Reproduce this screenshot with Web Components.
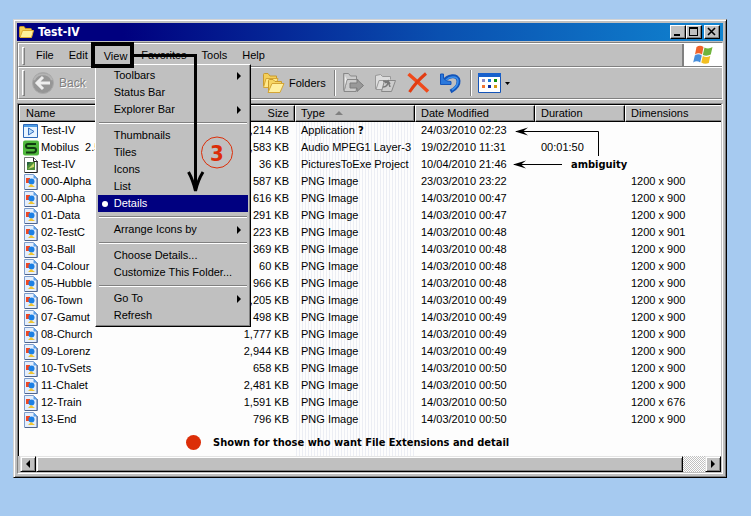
<!DOCTYPE html>
<html lang="en">
<head>
<meta charset="utf-8">
<title>Test-IV</title>
<style>
html{height:100%}
body{margin:0;min-height:100vh;box-sizing:border-box;padding:19px 24px 38px 13px;background:#a6caf0;display:flex;
 font:11px/17px "Liberation Sans",Arial,sans-serif;color:#000;
 --face:#c0c0c0;--shade:#808080;--label:"DejaVu Sans Condensed","DejaVu Sans",sans-serif}
</style>
</head>
<body>
<explorer-window>
  <title-bar slot="title">Test-IV</title-bar>
  <menu-bar slot="bars"></menu-bar>
  <tool-bar slot="bars"></tool-bar>
  <file-list>Shown for those who want File Extensions and detail</file-list>
  <note-layer slot="notes"></note-layer>
</explorer-window>
<script>
const define=(name,html,init)=>customElements.define(name,class extends HTMLElement{
  constructor(){super();this.attachShadow({mode:'open'}).innerHTML=html;if(init)init(this.shadowRoot,this);}
});
const reset=`*,:host{box-sizing:border-box}button{font:inherit;color:inherit;background:none;border:0;padding:0;margin:0;text-align:left}svg{display:block;flex:none}`;

define('explorer-window',`<style>${reset}
:host{flex:1;min-width:0;display:flex;flex-direction:column;position:relative;background:var(--face);padding:3px;
 border:1px solid;border-color:#d4d4d4 #000 #000 #d4d4d4;box-shadow:inset 1px 1px #fff,inset -1px -1px var(--shade)}
.bars{margin-top:1px;border:1px solid;border-color:var(--shade) #fff #fff var(--shade);position:relative;z-index:2}
main{flex:1;display:flex;margin-top:3px}
</style><slot name="title"></slot><div class="bars"><slot name="bars"></slot></div><main><slot></slot></main><slot name="notes"></slot>`);

define('title-bar',`<style>${reset}
:host{display:flex;align-items:center;height:18px;padding:0 3px 0 2px;background:linear-gradient(90deg,#00007f 15%,#0a50b0 60%,#1084d0);color:#fff}
h1{margin:0 auto 0 4px;font:bold 12px/18px "DejaVu Sans Condensed","DejaVu Sans",sans-serif}
button{width:16px;height:14px;background:var(--face);border:1px solid;border-color:#fff #000 #000 #fff;box-shadow:inset -1px -1px var(--shade)}
button+button+button{margin-left:2px}
</style>
<svg width="15" height="14" viewBox="0 0 15 14"><path d="M.5 12V2.500q0-1 1-1H5l1.500 2h5q1 0 1 1V6" fill="#f5cf55" stroke="#c89624"/><path d="M1 12.500 3.500 5.500H14.500L12.500 12.500z" fill="#fff19b" stroke="#dfac32"/></svg>
<h1><slot></slot></h1>
<button aria-label="Minimize"><svg width="14" height="12"><path d="M3 8h6v2H3z"/></svg></button>
<button aria-label="Maximize"><svg width="14" height="12"><path d="M2 1h9v9H2zM3 3v6h7V3z" fill-rule="evenodd"/></svg></button>
<button aria-label="Close"><svg width="14" height="12"><path d="M3 2l7 7M10 2l-7 7" stroke="#000" stroke-width="1.600"/></svg></button>`);

define('menu-bar',`<style>${reset}
:host{display:flex;height:24px;border-left:1px solid #fff;border-top:1px solid #fff;border-bottom:1px solid var(--shade)}
i{width:3px;margin:3px 0 1px 3px;border:1px solid;border-color:#fff var(--shade) var(--shade) #fff}
nav{display:flex;margin-left:4px;flex:1}
nav>button,.open>button{padding:0 8px 0 7px;height:22px;line-height:22px}
.open{position:relative}
.open>button{padding:1px 7px 0 8px}
drop-menu{position:absolute;left:-1px;top:20px;z-index:3}
.logo{width:40px;background:#fff;border-left:2px solid var(--shade);padding:1px 0 0 9px}
</style><i></i><nav><button>File</button><button>Edit</button><div class="open"><button aria-expanded="true">View</button><drop-menu></drop-menu></div><button>Favorites</button><button>Tools</button><button>Help</button></nav>
<div class="logo"><svg width="21" height="19" viewBox="0 0 21 19"><path d="M3.500 2Q7-.5 10.500 2L9 9.500Q5.500 7 2 9.500z" fill="#f0622a"/><path d="M11.500 2.500q4 2 8-.5l-1.700 7.500q-4 2-8 .5z" fill="#70b43c"/><path d="M1.800 10.500q3.700-2.500 7 0L7.200 17.500q-3.500-2.500-7 0z" fill="#478edb"/><path d="M9.800 11q4 2 7.500-.3L15.800 18q-4 1.800-7.500-.5z" fill="#f3bf21"/></svg></div>`);

define('drop-menu',`<style>${reset}
:host{display:block;width:156px;background:var(--face);padding:2px;border:1px solid;border-color:#fff #000 #000 #fff;box-shadow:inset -1px -1px var(--shade)}
button{display:flex;align-items:center;width:100%;height:17px;padding:0 7px 0 16px}
button svg{margin-left:auto}
.on{background:navy;color:#fff;padding-left:4px}
.on:before{content:"";width:6px;height:6px;border-radius:3px;background:#fff;margin-right:6px}
hr{margin:4px 1px 3px;border:0;border-top:1px solid var(--shade);border-bottom:1px solid #fff}
</style><div role="menu"></div>`,root=>{
  const sub=new Set(['Toolbars','Explorer Bar','Arrange Icons by','Go To']);
  root.querySelector('div').innerHTML=['Toolbars','Status Bar','Explorer Bar','','Thumbnails','Tiles','Icons','List','Details','','Arrange Icons by','','Choose Details...','Customize This Folder...','','Go To','Refresh']
   .map(t=>t?`<button role="menuitem"${t==='Details'?' class="on"':''}>${t}${sub.has(t)?'<svg width="4" height="8"><path d="M0 0l4 4-4 4z"/></svg>':''}</button>`:'<hr>').join('');
});

define('tool-bar',`<style>${reset}
:host{display:flex;align-items:center;height:32px;border-left:1px solid #fff;border-top:1px solid #fff;border-bottom:1px solid var(--shade)}
i{width:3px;height:26px;margin-left:3px;border:1px solid;border-color:#fff var(--shade) var(--shade) #fff}
button{display:flex;align-items:center;gap:4px}
.back{width:64px;margin-left:6px;color:var(--shade);text-shadow:1px 1px #fff;font-size:12px}
.folders{margin-left:167px}
.sep{width:2px;height:26px;border-left:1px solid var(--shade);border-right:1px solid #fff;margin:0 6px 0 8px}
.row{display:flex;gap:9px}
</style><i></i>
<button class="back" disabled><svg width="24" height="24" viewBox="0 0 24 24"><circle cx="12" cy="12" r="10.500" fill="#969696" stroke="#aaa"/><path d="M3 9a10 10 0 0 1 18 0" fill="none" stroke="#b4b4b4" stroke-width="2"/><path d="M12 6l-6 6 6 6M7 12h12" fill="none" stroke="#eee" stroke-width="3"/></svg>Back</button>
<button class="folders"><svg width="23" height="22" viewBox="0 0 23 22"><path d="M1.500 14V2.500q0-1 1-1H6l2 2.500h6.500v4" fill="#f4cf5a" stroke="#c99a2c"/><path d="M1.500 15.500 4 6.500h12l-3 9z" fill="#ffe98b" stroke="#d4a536"/><path d="M6.500 19V8.500q0-1 1-1H11l2 2h6.500v4" fill="#f6d663" stroke="#c99a2c"/><path d="M6 20.500l4-9h12l-4 9z" fill="#fff0a0" stroke="#d4a536"/></svg>Folders</button>
<span class="sep"></span>
<div class="row">
<button aria-label="Move To" disabled><svg width="23" height="22" viewBox="0 0 23 22"><path d="M1.500 18V1.500h5l2 2.500h6v4M2 19.500 5 7.500h11l-2 12z" fill="#ccc" stroke="#888"/><path d="M2 2v17l3-11" fill="#eee" stroke="#999"/><path d="M8 11h7V7.500l6.500 6-6.500 6V16H8z" fill="#999" stroke="#7c7c7c"/></svg></button>
<button aria-label="Copy To" disabled><svg width="23" height="22" viewBox="0 0 23 22"><path d="M1.500 17V3.500l5-1 2 2h8v3M2 17.500l3-9h6l-2 9z" fill="#ddd" stroke="#999"/><path d="M7.500 19.500l3-11h11l-4 11z" fill="#ccc" stroke="#888"/><path d="M9 15q5 0 5-6l-3 2m3-2 2 3M9 9q6 0 7 6" fill="none" stroke="#777" stroke-width="1.500"/></svg></button>
<button aria-label="Delete"><svg width="24" height="22" viewBox="0 0 24 22"><path d="M2.500 2Q13 11 22 19.500" fill="none" stroke="#f04a1b" stroke-width="3.500"/><path d="M20 1.500Q10 10 3.500 20" fill="none" stroke="#e23c12" stroke-width="3"/></svg></button>
<button aria-label="Undo"><svg width="23" height="22" viewBox="0 0 23 22"><path d="M5 9.500C8 3.500 19 1.500 19.500 9Q20 15 11.500 19.500" fill="none" stroke="#1454b8" stroke-width="4"/><path d="M1.500 2v10.500H12V9.500L8 9 4.500 6.500V2z" fill="#2a78dc" stroke="#1454b8"/><path d="M7 8c4-4 11-4 12 .500q.5 5-6 9.500" fill="none" stroke="#3a90ee" stroke-width="1.600"/></svg></button>
</div>
<span class="sep"></span>
<button aria-label="Views"><svg width="23" height="20" viewBox="0 0 23 20"><path d="M.5.5h22v19H.5z" fill="#fff" stroke="#1454b8"/><path d="M0 0h23v4H0z" fill="#1760cc"/><path d="M4 6h3v3H4z" fill="#8c8cc8"/><path d="M10 6h3v3h-3z" fill="#1678d8"/><path d="M16 6h3v3h-3z" fill="#109010"/><path d="M4 12h3v3H4z" fill="#f47430"/><path d="M10 12h3v3h-3z" fill="#1030a0"/><path d="M16 12h3v3h-3z" fill="#d49a10"/></svg><svg width="5" height="3"><path d="M0 0h5L2.500 3z"/></svg></button>`);

const icons={
 png:'<path d="M1.500.5h9l4 4v11h-13z" fill="#e4eefc" stroke="#7c9ccc"/><path d="M10.500.5l4 4h-4z" fill="#5ba0e8"/><path d="M14 4v11.500H2" fill="none" stroke="#50658c"/><path d="M3 4h4v5H3z" fill="#ee4824"/><circle cx="8.500" cy="7.500" r="3" fill="#1c80e4"/><path d="M5 13l3-3 4 3z" fill="#f0c430"/>',
 app:'<path d="M.5 1.500h14v13H.5z" fill="#e8f4ff" stroke="#2c68b8"/><path d="M1 2h13v2H1z" fill="#4c9ae4"/><path d="M5.500 5v7L11 8.500z" fill="#b8dcfa" stroke="#3870c0"/>',
 snd:'<rect width="16" height="15" y=".5" rx="2" fill="#50b83c"/><path d="M13 4H5Q3 4 3 6t2 2h6q2 0 2 2t-2 2.500H3" fill="none" stroke="#103c10" stroke-width="2"/>',
 pte:'<path d="M1.500.5h9l4 4v11h-13z" fill="#fff" stroke="#777"/><path d="M10.500.5v4h4M14 4v11.500H2" fill="none" stroke="#222"/><path d="M4 5h8v8H4z" fill="#4c8c38"/><path d="M5 12l6-6v4z" fill="#c8d868"/><path d="M4 5h4L4 9z" fill="#286040"/>'};
define('file-list',`<style>${reset}
:host{flex:1;min-width:0;display:flex;flex-direction:column;border:1px solid;border-color:var(--shade) #fff #fff var(--shade)}
.view{flex:1;display:flex;flex-direction:column;margin-right:1px;border-left:1px solid #000;border-top:1px solid #000;
 background:repeating-linear-gradient(90deg,#eceef4 0 1px,#fdfdfd 1px 3px) 277px 0/119px 100% no-repeat,#fdfdfd}
table{width:100%;table-layout:fixed;border-collapse:separate;border-spacing:0}
th,td{height:17px;padding:0 6px;text-align:left;font-weight:normal;white-space:nowrap;overflow:hidden}
th{background:var(--face);border:1px solid;border-color:#fff #000 #000 #fff;box-shadow:inset -1px -1px var(--shade);padding:0 5px;line-height:15px}
th svg{display:inline-block;margin:0 0 2px 10px}
th:first-child{padding-left:6px}th:last-child{border-right:0;box-shadow:inset 0 -1px var(--shade)}
td:first-child div{display:flex;gap:2px;white-space:pre;height:17px;align-items:center}td:first-child{padding-left:4px}
.num{text-align:right}
b{font-family:var(--label)}
.caption{flex:1;display:flex;align-items:center;gap:12px;min-height:27px;padding-left:167px;font:bold 11px/17px var(--label)}
.caption:before{content:"";width:15px;height:15px;border-radius:8px;background:#dc2e08}
</style><div class="view"><table><colgroup><col style="width:196px"><col style="width:80px"><col style="width:120px"><col style="width:120px"><col style="width:90px"><col></colgroup>
<thead><tr><th>Name</th><th class="num">Size</th><th>Type<svg width="8" height="4"><path d="M0 4l4-4 4 4z" fill="#808080"/></svg></th><th>Date Modified</th><th>Duration</th><th>Dimensions</th></tr></thead><tbody></tbody></table>
<div class="caption"><slot></slot></div></div><scroll-bar></scroll-bar>`,root=>{
 const rows=[['Test-IV','9,214','Application <b>?</b>','24/03/2010 02:23','','','app'],['Mobilus  2.5','2,583','Audio MPEG1 Layer-3','19/02/2010 11:31','00:01:50','','snd'],['Test-IV','36','PicturesToExe Project','10/04/2010 21:46','','','pte']];
 for(const [n,s,d,h='900'] of [['000-Alpha','587','23/03/2010 23:22'],['00-Alpha','616','00:47'],['01-Data','291','00:47'],['02-TestC','223','00:48','901'],['03-Ball','369','00:48'],['04-Colour','60','00:48'],['05-Hubble','966','00:48'],['06-Town','2,205','00:49'],['07-Gamut','498','00:49'],['08-Church','1,777','00:49'],['09-Lorenz','2,944','00:49'],['10-TvSets','658','00:50'],['11-Chalet','2,481','00:50'],['12-Train','1,591','00:50','676'],['13-End','796','00:50']])
  rows.push([n,s,'PNG Image',d.length>5?d:'14/03/2010 '+d,'','1200 x '+h,'png']);
 root.querySelector('tbody').innerHTML=rows.map(r=>`<tr><td><div><svg width="16" height="16" viewBox="0 0 16 16">${icons[r[6]]}</svg>${r[0]}</div></td><td class="num">${r[1]} KB</td><td>${r[2]}</td><td>${r[3]}</td><td>${r[4]}</td><td>${r[5]}</td></tr>`).join('');
});

define('scroll-bar',`<style>${reset}
:host{display:flex;height:16px;margin:0 1px 1px 2px;background:repeating-conic-gradient(#fff 0 25%,#c0c0c0 0 50%) 0 0/2px 2px}
button,.thumb{width:16px;background:var(--face);border:1px solid;border-color:#e4e4e4 #000 #000 #e4e4e4;box-shadow:inset 1px 1px #fff,inset -1px -1px var(--shade);display:flex;align-items:center;justify-content:center}
.thumb{flex:1;margin-right:22px}
</style><button aria-label="Scroll left"><svg width="4" height="8"><path d="M4 0v8L0 4z"/></svg></button><div class="thumb"></div><button aria-label="Scroll right"><svg width="4" height="8"><path d="M0 0v8l4-4z"/></svg></button>`);

define('note-layer',`<style>
:host{position:absolute;inset:-1px;z-index:5;pointer-events:none}
svg{display:block;width:100%;height:100%}
text{font-family:var(--label);font-weight:bold}
</style><svg><g fill="none" stroke="#000"><path stroke-width="4" d="M80 25h39v22H80z"/><path stroke-width="3" d="M121 36.500h61.500V171"/><path stroke-width="3" d="M175.500 153q4.500 8 7 19q2.500-11 7.500-19"/>
<path stroke-width="1" d="M585.500 137v-24.500H503M549 145.500H501"/></g>
<path d="M502 112.500l13-4-5 4 5 4zM500 145.500l13-4-5 4 5 4z"/>
<circle cx="204" cy="133.500" r="15.500" fill="none" stroke="#dc2e08"/>
<text x="204" y="142" text-anchor="middle" font-size="22" fill="#dc2e08">3</text>
<text x="558" y="149" font-size="11">ambiguity</text></svg>`);
</script>
</body>
</html>
